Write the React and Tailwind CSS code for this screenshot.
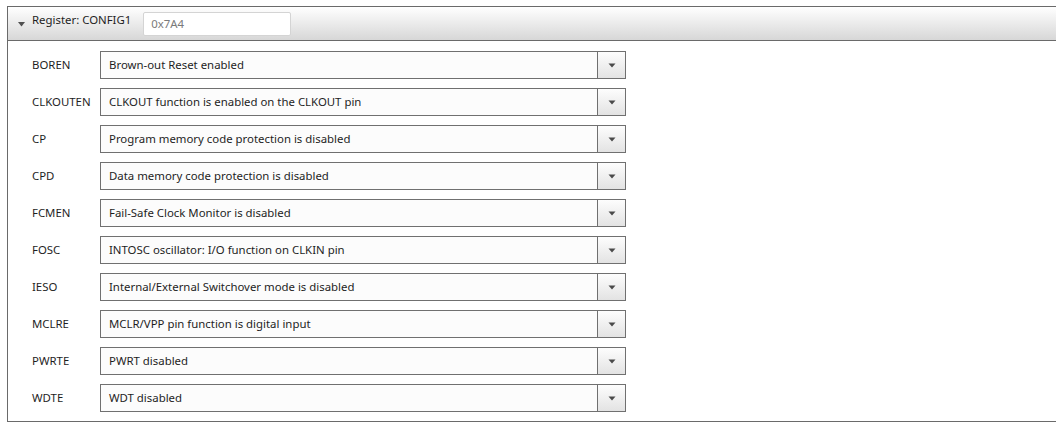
import React from "react";

const rows = [
  ["BOREN", "Brown-out Reset enabled"],
  ["CLKOUTEN", "CLKOUT function is enabled on the CLKOUT pin"],
  ["CP", "Program memory code protection is disabled"],
  ["CPD", "Data memory code protection is disabled"],
  ["FCMEN", "Fail-Safe Clock Monitor is disabled"],
  ["FOSC", "INTOSC oscillator: I/O function on CLKIN pin"],
  ["IESO", "Internal/External Switchover mode is disabled"],
  ["MCLRE", "MCLR/VPP pin function is digital input"],
  ["PWRTE", "PWRT disabled"],
  ["WDTE", "WDT disabled"],
];

function Row({ label, value }) {
  return (
    <div className="flex items-center h-[28px]">
      <div className="w-[68px] text-[11.4px] text-[#1e1e1e]">{label}</div>
      <div className="flex h-[28px] w-[526px] border border-[#707070] bg-[#fcfcfc]">
        <div className="flex-1 flex items-center pl-[8px] text-[11.4px] text-[#1e1e1e]">{value}</div>
        <div className="w-[28px] border-l border-[#707070] bg-gradient-to-b from-[#fdfdfd] to-[#e3e3e3] flex items-center justify-center">
          <svg width="8" height="5" viewBox="0 0 8 5">
            <path d="M0.5 0.5 L7.5 0.5 L4 4.5 Z" fill="#4a4a4a" />
          </svg>
        </div>
      </div>
    </div>
  );
}

export default function App() {
  return (
    <div
      className="w-[1056px] h-[422px] bg-white overflow-hidden pt-[6px] pl-[7px]"
      style={{ fontFamily: '"Noto Sans", "Open Sans", sans-serif' }}
    >
      <div className="border-l border-t border-b border-[#6a6a6a] h-[416px] flex flex-col">
        <div className="h-[34px] border-b border-[#6a6a6a] bg-gradient-to-b from-[#ffffff] to-[#d7d7d7] flex items-center">
          <svg className="ml-[10px] mt-[2px]" width="7" height="5" viewBox="0 0 7 5">
            <path d="M0 0 L7 0 L3.5 4.5 Z" fill="#505050" />
          </svg>
          <div className="ml-[7px] text-[11.4px] text-[#1e1e1e] -mt-[7px]">Register: CONFIG1</div>
          <div className="ml-[12px] h-[24px] w-[148px] rounded-[2px] border border-[#d4d4d4] bg-white flex items-center pl-[7px] text-[11.4px] text-[#7a7a7a]">
            0x7A4
          </div>
        </div>
        <div className="flex flex-col gap-[9px] pt-[10px] pl-[24px]">
          {rows.map(([l, v]) => (
            <Row key={l} label={l} value={v} />
          ))}
        </div>
      </div>
    </div>
  );
}
